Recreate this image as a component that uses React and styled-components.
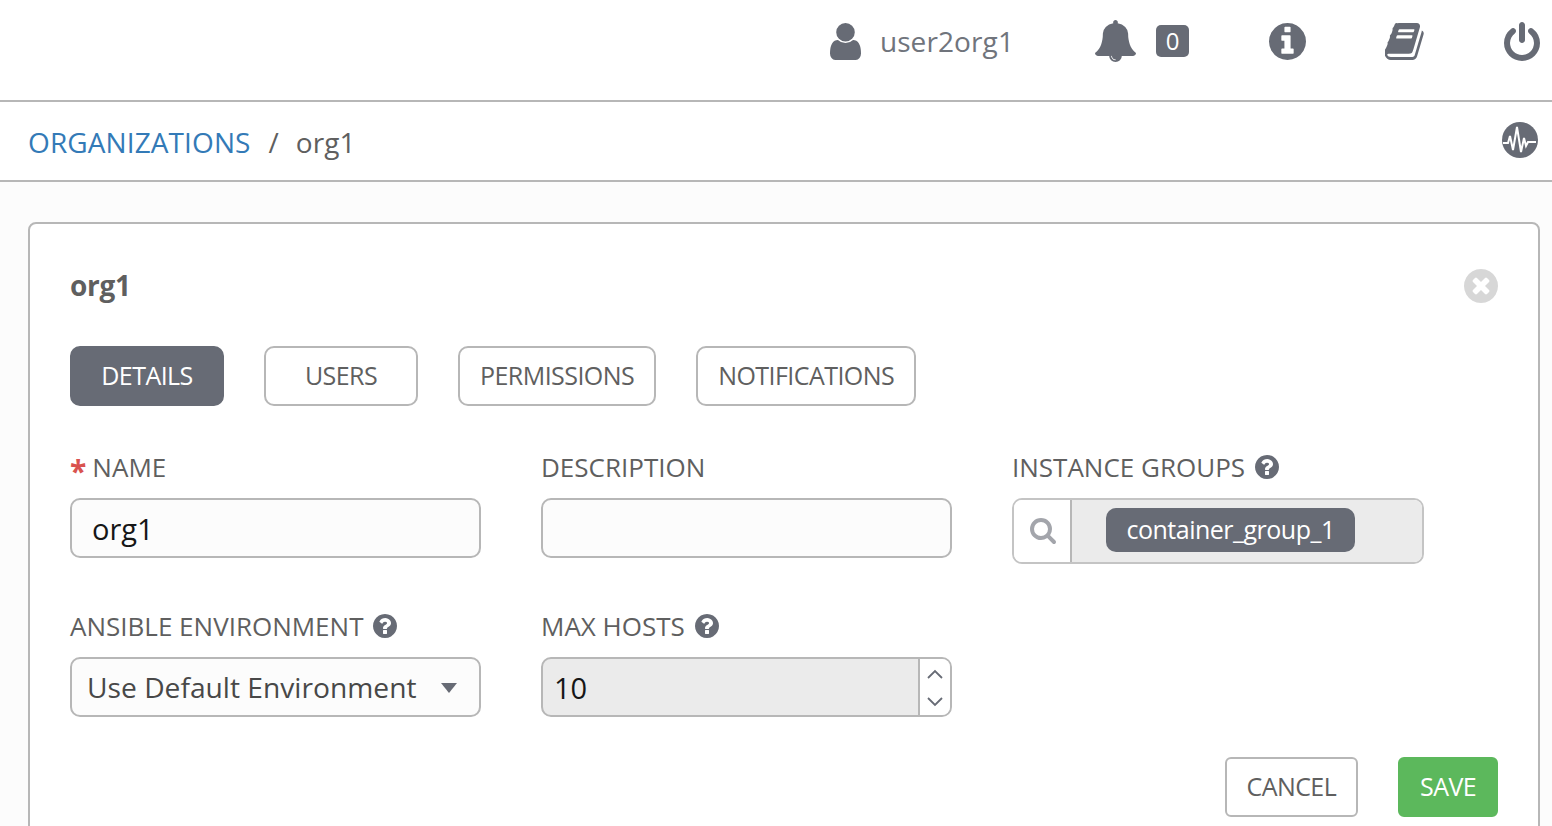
import React from "react";
import styled, { createGlobalStyle } from "styled-components";

const Global = createGlobalStyle`
  html, body { margin: 0; height: 100%; overflow: hidden; background: #fcfcfc; }
  body { font-family: "Open Sans", "Liberation Sans", sans-serif; color: #5f5f5f; }
  * { box-sizing: border-box; }
`;

const P = {
  user: ["256 128 1280 1536", "M1536 1399q0 109-62.5 187t-150.5 78h-854q-88 0-150.5-78t-62.5-187q0-85 8.5-160.5t31.5-152 58.5-131 94-89 134.5-34.5q131 128 313 128t313-128q76 0 134.5 34.5t94 89 58.5 131 31.5 152 8.5 160.5zm-256-887q0 159-112.5 271.5t-271.5 112.5-271.5-112.5-112.5-271.5 112.5-271.5 271.5-112.5 271.5 112.5 112.5 271.5z"],
  bell: ["64 0 1664 1792", "M912 1696q0-16-16-16-59 0-101.5-42.5t-42.5-101.5q0-16-16-16t-16 16q0 73 51.5 124.5t124.5 51.5q16 0 16-16zm816-288q0 52-38 90t-90 38h-448q0 106-75 181t-181 75-181-75-75-181h-448q-52 0-90-38t-38-90q50-42 91-88t85-119.5 74.5-158.5 50-206 19.5-260q0-152 117-282.5t307-158.5q-8-19-8-39 0-40 28-68t68-28 68 28 28 68q0 20-8 39 190 28 307 158.5t117 282.5q0 139 19.5 260t50 206 74.5 158.5 85 119.5 91 88z"],
  info: ["128 128 1536 1536", "M1152 1376v-160q0-14-9-23t-23-9h-96v-512q0-14-9-23t-23-9h-320q-14 0-23 9t-9 23v160q0 14 9 23t23 9h96v320h-96q-14 0-23 9t-9 23v160q0 14 9 23t23 9h448q14 0 23-9t9-23zm-128-896v-160q0-14-9-23t-23-9h-192q-14 0-23 9t-9 23v160q0 14 9 23t23 9h192q14 0 23-9t9-23zm640 416q0 209-103 385.5t-279.5 279.5-385.5 103-385.5-103-279.5-279.5-103-385.5 103-385.5 279.5-279.5 385.5-103 385.5 103 279.5 279.5 103 385.5z"],
  book: ["80 128 1660 1536", "M1703 478q40 57 18 129l-275 906q-19 64-76.5 107.5t-122.5 43.5h-923q-77 0-148.5-53.5t-99.5-131.5q-24-67-2-127 0-4 3-27t4-37q1-8-3-21.5t-3-19.5q2-11 8-21t16.5-23.5 16.5-23.5q23-38 45-91.5t30-91.5q3-10 .5-30t-.5-28q3-11 17-28t17-23q21-36 42-92t25-90q1-9-2.5-32t.5-28q4-13 22-30.5t22-22.5q19-26 42.5-84.5t27.5-96.5q1-8-3-25.5t-2-26.5q2-8 9-18t18-23 17-21q8-12 16.5-30.5t15-35 16-36 19.5-32 26.5-23.5 36-11.5 47.5 5.5l-1 3q38-9 51-9h761q74 0 114 56t18 130l-274 906q-36 119-71.5 153.5t-128.5 34.5h-869q-27 0-38 15-11 16-1 43 24 70 144 70h923q29 0 56-15.5t35-41.5l300-987q7-22 5-57 38 15 59 43zm-1064 2q-4 13 2 22.5t20 9.5h608q13 0 25.5-9.5t16.5-22.5l21-64q4-13-2-22.5t-20-9.5h-608q-13 0-25.5 9.5t-16.5 22.5zm-83 256q-4 13 2 22.5t20 9.5h608q13 0 25.5-9.5t16.5-22.5l21-64q4-13-2-22.5t-20-9.5h-608q-13 0-25.5 9.5t-16.5 22.5z"],
  power: ["128 0 1536 1664", "M1664 896q0 156-61 298t-164 245-245 164-298 61-298-61-245-164-164-245-61-298q0-182 80.5-343t226.5-270q43-32 95.5-25t83.5 50q32 42 24.5 94.5t-49.5 84.5q-98 74-151.5 181t-53.5 228q0 104 40.5 198.5t109.5 163.5 163.5 109.5 198.5 40.5 198.5-40.5 163.5-109.5 109.5-163.5 40.5-198.5q0-121-53.5-228t-151.5-181q-42-32-49.5-84.5t24.5-94.5q31-43 84-50t95 25q146 109 226.5 270t80.5 343zm-640-768v640q0 52-38 90t-90 38-90-38-38-90v-640q0-52 38-90t90-38 90 38 38 90z"],
  help: ["128 128 1536 1536", "M1024 1376v-192q0-14-9-23t-23-9h-192q-14 0-23 9t-9 23v192q0 14 9 23t23 9h192q14 0 23-9t9-23zm256-672q0-88-55.5-163t-138.5-116-170-41q-243 0-371 213-15 24 8 42l132 100q7 6 19 6 16 0 25-12 53-68 86-92 34-24 86-24 48 0 85.5 26t37.5 59q0 38-20 61t-68 45q-63 28-115.5 86.5t-52.5 125.5v36q0 14 9 23t23 9h192q14 0 23-9t9-23q0-19 21.5-49.5t54.5-49.5q32-18 49-28.5t46-35 44.5-48 28-60.5 12.5-81zm384 192q0 209-103 385.5t-279.5 279.5-385.5 103-385.5-103-279.5-279.5-103-385.5 103-385.5 279.5-279.5 385.5-103 385.5 103 279.5 279.5 103 385.5z"],
  search: ["64 128 1664 1664", "M1216 832q0-185-131.5-316.5t-316.5-131.5-316.5 131.5-131.5 316.5 131.5 316.5 316.5 131.5 316.5-131.5 131.5-316.5zm512 832q0 52-38 90t-90 38q-54 0-90-38l-343-342q-179 124-399 124-143 0-273.5-55.5t-225-150-150-225-55.5-273.5 55.5-273.5 150-225 225-150 273.5-55.5 273.5 55.5 225 150 150 225 55.5 273.5q0 220-124 399l343 343q37 37 37 90z"],
  close: ["128 128 1536 1536", "M1277 1122q0-26-19-45l-181-181 181-181q19-19 19-45 0-27-19-46l-90-90q-19-19-46-19-26 0-45 19l-181 181-181-181q-19-19-45-19-27 0-46 19l-90 90q-19 19-19 46 0 26 19 45l181 181-181 181q-19 19-19 45 0 27 19 46l90 90q19 19 46 19 26 0 45-19l181-181 181 181q19 19 45 19 27 0 46-19l90-90q19-19 19-46zm387-226q0 209-103 385.5t-279.5 279.5-385.5 103-385.5-103-279.5-279.5-103-385.5 103-385.5 279.5-279.5 385.5-103 385.5 103 279.5 279.5 103 385.5z"],
};

const Svg = styled.svg`
  display: block;
  flex: none;
  width: ${(p) => p.$w}px;
  height: ${(p) => p.$h}px;
  margin-left: ${(p) => p.$ml || 0}px;
  fill: ${(p) => p.$c || "#676b75"};
`;
const Icon = ({ name, w, h, ml, c }) => (
  <Svg viewBox={P[name][0]} $w={w} $h={h} $ml={ml} $c={c} preserveAspectRatio="none">
    <path d={P[name][1]} />
  </Svg>
);

const Page = styled.div`
  width: 1552px;
  height: 826px;
  overflow: hidden;
  display: flex;
  flex-direction: column;
`;
const TopBar = styled.header`
  height: 102px;
  flex: none;
  background: #fff;
  border-bottom: 2px solid #b7b7b7;
  display: flex;
  justify-content: flex-end;
  align-items: center;
  padding: 0 12px 18px 0;
`;
const UserName = styled.span`
  margin-left: 19px;
  font-size: 28px;
  letter-spacing: 0.1px;
  color: #70747c;
`;
const Badge = styled.span`
  margin-left: 20px;
  margin-right: 1px;
  width: 33px;
  height: 32px;
  border-radius: 5px;
  background: #676b75;
  color: #fff;
  font-size: 24px;
  font-weight: 500;
  line-height: 32px;
  text-align: center;
`;
const Crumbs = styled.nav`
  height: 80px;
  flex: none;
  background: #fff;
  border-bottom: 2px solid #b7b7b7;
  display: flex;
  align-items: center;
  padding: 2px 14px 0 28px;
  font-size: 28px;
`;
const CrumbLink = styled.a`
  color: #337ab7;
  letter-spacing: 0.1px;
`;
const Slash = styled.span`
  margin: 0 17px 0 18px;
  color: #5f5f5f;
`;
const CrumbHere = styled.span`
  color: #5f5f5f;
  flex: 1;
  letter-spacing: 0.1px;
`;
const PulseSvg = styled.svg`
  display: block;
  flex: none;
  width: 36px;
  height: 36px;
  margin-top: -4px;
`;
const Content = styled.main`
  flex: 1;
  padding: 40px 12px 0 28px;
`;
const Card = styled.section`
  height: 700px;
  background: #fff;
  border: 2px solid #b7b7b7;
  border-radius: 8px;
  padding: 40px;
`;
const CardHead = styled.div`
  height: 44px;
  display: flex;
  align-items: center;
  justify-content: space-between;
`;
const CardTitle = styled.h1`
  margin: -2px 0 0;
  font-size: 28px;
  font-weight: 700;
  letter-spacing: -0.3px;
  color: #5f5f5f;
`;
const Tabs = styled.div`
  display: flex;
  gap: 40px;
  margin-top: 38px;
`;
const Tab = styled.button`
  height: 60px;
  min-width: 154px;
  padding: 0 20px 2px;
  border-radius: 10px;
  border: 2px solid ${(p) => (p.$active ? "#676b75" : "#b7b7b7")};
  background: ${(p) => (p.$active ? "#676b75" : "#fff")};
  color: ${(p) => (p.$active ? "#fff" : "#5f5f5f")};
  font: 400 25px "Open Sans", sans-serif;
  letter-spacing: -0.55px;
`;
const Form = styled.div`
  display: grid;
  grid-template-columns: repeat(3, 411px);
  grid-template-rows: 159px 152px;
  column-gap: 60px;
  margin-top: 40px;
`;
const Field = styled.div`
  display: flex;
  flex-direction: column;
`;
const Label = styled.label`
  height: 42px;
  margin-bottom: 10px;
  flex: none;
  display: flex;
  align-items: center;
  gap: 10px;
  font-size: 26px;
  color: #5f5f5f;
`;
const Star = styled.span`
  color: #d9534f;
  font-size: 30px;
  font-weight: 700;
  line-height: 1;
  height: 22px;
  margin-right: -4px;
`;
const Input = styled.div`
  height: 60px;
  flex: none;
  border: 2px solid #b7b7b7;
  border-radius: 10px;
  background: #fcfcfc;
  padding: 0 20px;
  display: flex;
  align-items: center;
  font-size: 29px;
  color: #161616;
`;
const Select = styled(Input)`
  padding: 0 22px 0 15px;
  justify-content: space-between;
  font-size: 28.2px;
  color: #484848;
`;
const Caret = styled.span`
  width: 0;
  height: 0;
  margin-top: 2px;
  border-left: 8px solid transparent;
  border-right: 8px solid transparent;
  border-top: 10px solid #676b75;
`;
const Spin = styled.div`
  height: 60px;
  flex: none;
  border: 2px solid #b7b7b7;
  border-radius: 10px;
  background: #ebebeb;
  display: flex;
  overflow: hidden;
`;
const SpinValue = styled.div`
  flex: 1;
  padding-left: 11px;
  display: flex;
  align-items: center;
  font-size: 29px;
  color: #161616;
`;
const SpinArrows = styled.div`
  width: 32px;
  background: #fff;
  border-left: 2px solid #b7b7b7;
  display: flex;
  flex-direction: column;
  justify-content: space-between;
  align-items: center;
  padding: 10px 0 8px;
`;
const Lookup = styled.div`
  height: 66px;
  width: 412px;
  flex: none;
  border: 2px solid #c4c4c4;
  border-radius: 10px;
  display: flex;
  overflow: hidden;
`;
const LookupBtn = styled.div`
  width: 58px;
  flex: none;
  padding-left: 2px;
  background: #fff;
  display: flex;
  align-items: center;
  justify-content: center;
  border-right: 2px solid #b7b7b7;
`;
const LookupBody = styled.div`
  flex: 1;
  background: #ebebeb;
  padding: 8px 0 0 34px;
`;
const Pill = styled.span`
  display: inline-block;
  height: 44px;
  line-height: 43px;
  padding: 0 20.5px;
  border-radius: 10px;
  background: #676b75;
  color: #fff;
  font-size: 25px;
  letter-spacing: -0.5px;
`;
const Actions = styled.div`
  display: flex;
  justify-content: flex-end;
  gap: 40px;
`;
const ActionBtn = styled.button`
  height: 60px;
  padding: 0 20px 2px;
  border-radius: 6px;
  border: 2px solid ${(p) => (p.$save ? "#5cb85c" : "#b7b7b7")};
  background: ${(p) => (p.$save ? "#5cb85c" : "#fff")};
  color: ${(p) => (p.$save ? "#fff" : "#5f5f5f")};
  font: 400 25px "Open Sans", sans-serif;
  letter-spacing: -0.6px;
`;

const Pulse = () => (
  <PulseSvg viewBox="0 0 36 36">
    <circle cx="18" cy="18" r="18" fill="#676b75" />
    <path d="M1 21h5l2-7 3 14 4-23 4 25 3-14 2 8 2-4 8 0" fill="none" stroke="#fff" strokeWidth="2" />
  </PulseSvg>
);
const Chev = ({ d }) => (
  <svg width="16" height="10" viewBox="0 0 16 10">
    <path d={d} fill="none" stroke="#676b75" strokeWidth="1.8" />
  </svg>
);
const Help = () => <Icon name="help" w={24} h={24} />;

export default function App() {
  return (
    <Page>
      <Global />
      <TopBar>
        <Icon name="user" w={31} h={37} />
        <UserName>user2org1</UserName>
        <Icon name="bell" w={41} h={42} ml={81} />
        <Badge>0</Badge>
        <Icon name="info" w={37} h={37} ml={79} />
        <Icon name="book" w={39} h={37} ml={79} />
        <Icon name="power" w={36} h={39} ml={80} />
      </TopBar>
      <Crumbs>
        <CrumbLink>ORGANIZATIONS</CrumbLink>
        <Slash>/</Slash>
        <CrumbHere>org1</CrumbHere>
        <Pulse />
      </Crumbs>
      <Content>
        <Card>
          <CardHead>
            <CardTitle>org1</CardTitle>
            <Icon name="close" w={34} h={34} c="#d7d7d7" />
          </CardHead>
          <Tabs>
            <Tab $active>DETAILS</Tab>
            <Tab>USERS</Tab>
            <Tab>PERMISSIONS</Tab>
            <Tab>NOTIFICATIONS</Tab>
          </Tabs>
          <Form>
            <Field>
              <Label><Star>*</Star>NAME</Label>
              <Input>org1</Input>
            </Field>
            <Field>
              <Label>DESCRIPTION</Label>
              <Input />
            </Field>
            <Field>
              <Label>INSTANCE GROUPS <Help /></Label>
              <Lookup>
                <LookupBtn><Icon name="search" w={26} h={26} c="#a3a5ab" /></LookupBtn>
                <LookupBody><Pill>container_group_1</Pill></LookupBody>
              </Lookup>
            </Field>
            <Field>
              <Label>ANSIBLE ENVIRONMENT <Help /></Label>
              <Select>Use Default Environment<Caret /></Select>
            </Field>
            <Field>
              <Label>MAX HOSTS <Help /></Label>
              <Spin>
                <SpinValue>10</SpinValue>
                <SpinArrows>
                  <Chev d="M1 9l7-7 7 7" />
                  <Chev d="M1 1l7 7 7-7" />
                </SpinArrows>
              </Spin>
            </Field>
          </Form>
          <Actions>
            <ActionBtn>CANCEL</ActionBtn>
            <ActionBtn $save>SAVE</ActionBtn>
          </Actions>
        </Card>
      </Content>
    </Page>
  );
}
